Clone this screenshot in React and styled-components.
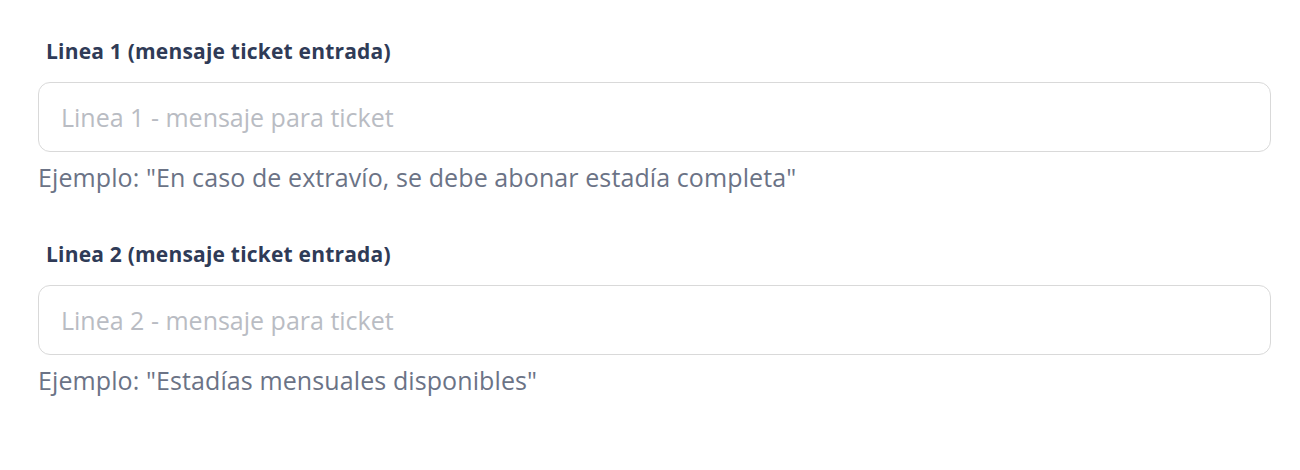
import React from 'react'
import styled, { createGlobalStyle } from 'styled-components'

const GlobalStyle = createGlobalStyle`
  body {
    margin: 0;
    background: #ffffff;
    font-family: "Open Sans", "Noto Sans", sans-serif;
  }
`

const fields = [
  {
    label: 'Linea 1 (mensaje ticket entrada)',
    placeholder: 'Linea 1 - mensaje para ticket',
    hint: 'Ejemplo: "En caso de extravío, se debe abonar estadía completa"',
  },
  {
    label: 'Linea 2 (mensaje ticket entrada)',
    placeholder: 'Linea 2 - mensaje para ticket',
    hint: 'Ejemplo: "Estadías mensuales disponibles"',
  },
]

export default function App() {
  return (
    <>
      <GlobalStyle />
      <Form>
        {fields.map((f) => (
          <Field key={f.label}>
            <Label>{f.label}</Label>
            <Input type="text" placeholder={f.placeholder} />
            <Hint>{f.hint}</Hint>
          </Field>
        ))}
      </Form>
    </>
  )
}

const Form = styled.div`
  width: 1233px;
  padding: 38px 0 0 38px;
  display: flex;
  flex-direction: column;
  gap: 47px;
`

const Field = styled.div`
  display: flex;
  flex-direction: column;
`

const Label = styled.label`
  margin: 0 0 18px 8px;
  font-size: 21px;
  line-height: 26px;
  font-weight: 700;
  letter-spacing: 0.2px;
  color: #2f3b57;
`

const Input = styled.input`
  box-sizing: border-box;
  width: 100%;
  height: 70px;
  padding: 0 22px;
  border: 1px solid #d9d9d9;
  border-radius: 12px;
  font-family: inherit;
  font-size: 25px;
  color: #2e3a59;
  outline: none;
  &::placeholder {
    color: #b9bcc3;
  }
`

const Hint = styled.div`
  margin-top: 8px;
  font-size: 25px;
  line-height: 34px;
  letter-spacing: 0.1px;
  color: #6b7386;
`
